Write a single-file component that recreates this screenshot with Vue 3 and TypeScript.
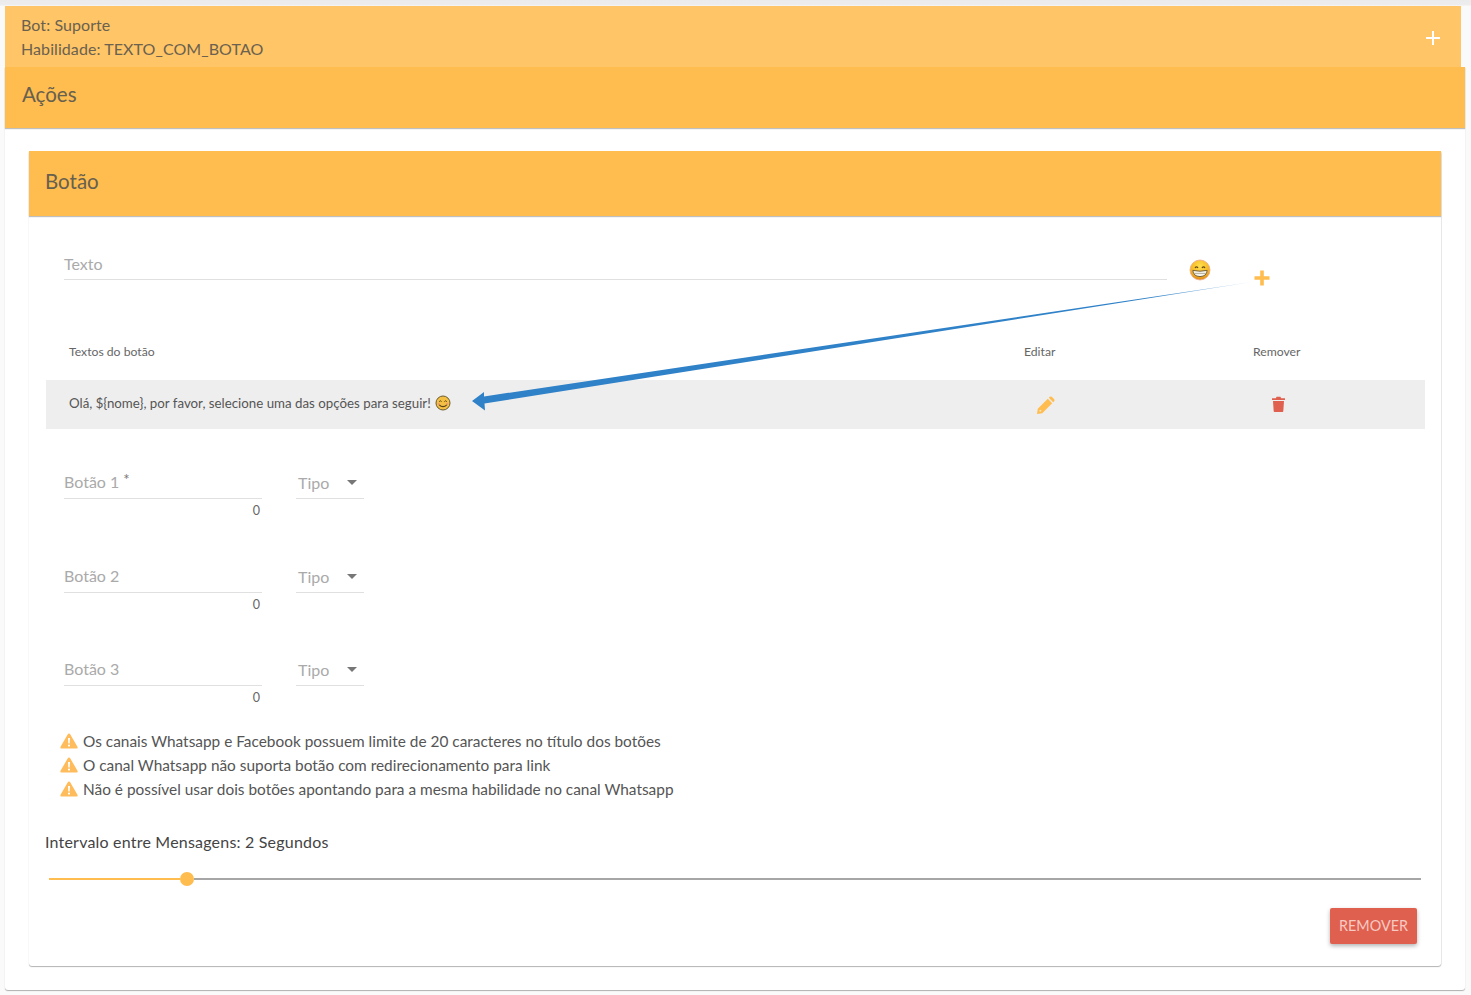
<script setup lang="ts">
const fields = [
  { label: 'Botão 1', required: true },
  { label: 'Botão 2', required: false },
  { label: 'Botão 3', required: false },
]
const warnings = [
  'Os canais Whatsapp e Facebook possuem limite de 20 caracteres no título dos botões',
  'O canal Whatsapp não suporta botão com redirecionamento para link',
  'Não é possível usar dois botões apontando para a mesma habilidade no canal Whatsapp',
]
</script>

<template>
  <div class="page">
    <div class="top">
      <div class="top-text">
        <div>Bot: Suporte</div>
        <div>Habilidade: TEXTO_COM_BOTAO</div>
      </div>
      <svg class="top-plus" width="16" height="16" viewBox="0 0 16 16"><path d="M8 1v14M1 8h14" stroke="#fff" stroke-width="2" /></svg>
    </div>
    <div class="outer">
      <div class="outer-head">Ações</div>
      <div class="outer-body">
        <div class="inner">
          <div class="inner-head">Botão</div>
          <div class="inner-body">
            <div class="text-row">
              <div class="text-field">Texto</div>
              <svg class="grin" width="22" height="22" viewBox="0 0 22 22">
                <defs>
                  <radialGradient id="g1" cx="50%" cy="30%" r="70%"><stop offset="0" stop-color="#ffdf50" /><stop offset="0.7" stop-color="#f5b41e" /><stop offset="1" stop-color="#d9841c" /></radialGradient>
                </defs>
                <circle cx="11" cy="11" r="10" fill="url(#g1)" stroke="#f0a98a" stroke-width="0.800" />
                <path d="M6 9Q7.500 6.800 9 9M13 9Q14.500 6.800 16 9" fill="none" stroke="#6a4a18" stroke-width="1.300" />
                <path d="M3.800 11.400Q11 13 18.200 11.400Q17.800 17.400 11 17.600Q4.200 17.400 3.800 11.400Z" fill="#f4f4ee" stroke="#7a6238" stroke-width="1" />
                <path d="M4.400 14.400H17.600" stroke="#a89c84" stroke-width="0.800" />
              </svg>
              <svg class="add" width="18" height="18" viewBox="0 0 18 18"><path d="M9 1.500v15M1.500 9h15" stroke="#ffbc4f" stroke-width="3.600" /></svg>
            </div>

            <div class="table">
              <div class="thead">
                <span>Textos do botão</span>
                <span>Editar</span>
                <span>Remover</span>
              </div>
              <div class="trow">
                <span class="msg">Olá, ${nome}, por favor, selecione uma das opções para seguir!
                  <svg class="smile" width="16" height="16" viewBox="0 0 16 16">
                    <circle cx="8" cy="8" r="7" fill="#f4c044" stroke="#6b5a30" stroke-width="1" />
                    <path d="M4.200 6.600Q5.400 5 6.600 6.600M9.400 6.600Q10.600 5 11.800 6.600" fill="none" stroke="#5a4420" stroke-width="1" />
                    <path d="M4 9.600Q8 13.600 12 9.600" fill="none" stroke="#5a4420" stroke-width="1.100" />
                    <circle cx="3.800" cy="8.800" r="1.100" fill="#f09a6a" /><circle cx="12.200" cy="8.800" r="1.100" fill="#f09a6a" />
                  </svg>
                </span>
                <span class="edit-cell">
                  <svg width="18" height="18" viewBox="0 0 18 18"><path d="M0 18L0.800 12.800L10.800 2.800L15.200 7.200L5.200 17.200ZM11.800 1.800L12.800 0.800Q13.800 0 14.800 0.800L17.200 3.200Q18 4.200 17.200 5.200L16.200 6.200Z" fill="#ffbc4f" /><circle cx="3.300" cy="14.700" r="1" fill="#ffe6bd" /></svg>
                </span>
                <span class="del-cell">
                  <svg width="13" height="16" viewBox="0 0 13 16"><path d="M0 2.300H3.800L4.600 0.800H8.400L9.200 2.300H13V4H0ZM1 5H12L11.300 15.200Q11.200 16 10.400 16H2.600Q1.800 16 1.700 15.200Z" fill="#e0604f" /></svg>
                </span>
              </div>
            </div>

            <div class="fields">
              <div v-for="f in fields" :key="f.label" class="field-row">
                <div class="btn-field">
                  <div class="btn-input">{{ f.label }}<sup v-if="f.required" class="req">*</sup></div>
                  <div class="count">0</div>
                </div>
                <div class="select">
                  <span>Tipo</span>
                  <i class="caret"></i>
                </div>
              </div>
            </div>

            <div class="warnings">
              <div v-for="w in warnings" :key="w" class="warn">
                <svg width="18" height="16" viewBox="0 0 18 16"><path d="M9 0.500Q9.800 0.500 10.200 1.200L17.600 14Q18 15.500 16.600 15.500H1.400Q0 15.500 0.400 14L7.800 1.200Q8.200 0.500 9 0.500Z" fill="#ffbc5c" /><path d="M8 5H10L9.700 10.500H8.300Z" fill="#fff" /><circle cx="9" cy="12.600" r="1.100" fill="#fff" /></svg>
                <span>{{ w }}</span>
              </div>
            </div>

            <div class="interval">Intervalo entre Mensagens: 2 Segundos</div>
            <div class="slider">
              <div class="track-on"></div>
              <div class="thumb"></div>
              <div class="track-off"></div>
            </div>
            <div class="actions">
              <button class="remove" type="button">REMOVER</button>
            </div>
          </div>
        </div>
      </div>
    </div>

    <svg class="arrow" width="1471" height="995" viewBox="0 0 1471 995">
      <defs>
        <linearGradient id="fade" gradientUnits="userSpaceOnUse" x1="1252" y1="282" x2="1150" y2="297">
          <stop offset="0" stop-color="#2f81c8" stop-opacity="0.4" />
          <stop offset="1" stop-color="#2f81c8" />
        </linearGradient>
      </defs>
      <path d="M1252 282L484 396.500L484 392L472 401L485 410.500L484.500 403.500Z" fill="url(#fade)" />
    </svg>
  </div>
</template>

<style scoped>
.page {
  position: relative;
  box-sizing: border-box;
  width: 1471px;
  height: 995px;
  padding: 6px 0 0 5px;
  overflow: hidden;
  background: linear-gradient(#ebebeb 0, #ededed 5px, #fafafa 6px);
  font-family: Lato, "Open Sans", sans-serif;
  font-variant-numeric: lining-nums;
  color: #666;
}
.top {
  box-sizing: border-box;
  width: 1456px;
  height: 61px;
  padding: 7px 16px 0;
  display: flex;
  justify-content: space-between;
  background: #ffc566;
  font-size: 16px;
  line-height: 24px;
  letter-spacing: 0.08px;
  color: #6a6150;
}
.top-plus {
  margin: 17px 4px 0 0;
}
.outer {
  width: 1460px;
  height: 923px;
  background: #fff;
  border-radius: 0 0 3px 3px;
  box-shadow: 0 1px 1px rgba(0, 0, 0, 0.3);
}
.outer-head {
  box-sizing: border-box;
  height: 61px;
  padding: 13px 17px;
  background: #ffbc4f;
  font-size: 20.500px;
  line-height: 28px;
  color: #66604f;
  box-shadow: 0 1px 1px rgba(0, 0, 0, 0.25);
}
.outer-body {
  padding: 23px 24px;
}
.inner {
  width: 1412px;
  height: 815px;
  background: #fff;
  border-radius: 3px;
  box-shadow: 0 1px 1px rgba(0, 0, 0, 0.3), 1px 0 0 #eee;
}
.inner-head {
  box-sizing: border-box;
  height: 65px;
  padding: 16px 16px;
  background: #ffbc4f;
  font-size: 20.500px;
  line-height: 28px;
  color: #66604f;
  box-shadow: 0 1px 1px rgba(0, 0, 0, 0.25);
}
.inner-body {
  padding: 0 16px;
}
.text-row {
  display: flex;
  align-items: flex-start;
  height: 64px;
  padding: 30px 0 0 19px;
  box-sizing: border-box;
}
.text-field {
  box-sizing: border-box;
  width: 1103px;
  height: 34px;
  padding-top: 8px;
  font-size: 16px;
  line-height: 20px;
  color: #aaa;
  border-bottom: 1px solid #e0e0e0;
}
.grin {
  margin: 13px 0 0 22px;
}
.add {
  margin: 23px 0 0 42px;
}
.table {
  width: 1379px;
  margin: 52px 0 0 1px;
}
.thead,
.trow {
  display: grid;
  grid-template-columns: 978px 229px 1fr;
  align-items: center;
}
.thead {
  height: 48px;
  padding: 0 0 10px 23px;
  box-sizing: border-box;
  font-size: 12.200px;
  color: #666;
}
.thead span:nth-child(2),
.thead span:nth-child(3) {
  margin-left: -23px;
}
.trow {
  height: 49px;
  background: #eeeeee;
  font-size: 13.300px;
  color: #555;
}
.msg {
  padding: 0 0 3px 23px;
  display: flex;
  align-items: center;
  gap: 4px;
}
.edit-cell,
.del-cell {
  display: flex;
}
.edit-cell {
  margin-left: 13px;
}
.del-cell {
  margin: 0 0 2px 19px;
}
.fields {
  padding: 30px 0 0 19px;
}
.field-row {
  display: flex;
  gap: 34px;
  height: 93.500px;
  align-items: flex-start;
}
.btn-field {
  width: 198px;
}
.btn-input {
  box-sizing: border-box;
  height: 40px;
  padding-top: 13px;
  font-size: 16px;
  line-height: 20px;
  color: #aaa;
  border-bottom: 1px solid #e0e0e0;
}
.req {
  font-size: 15px;
  line-height: 0;
  margin-left: 4px;
  color: #777;
  vertical-align: 3px;
}
.count {
  padding: 5px 2px 0 0;
  text-align: right;
  font-size: 12.500px;
  line-height: 14px;
  color: #666;
}
.select {
  box-sizing: border-box;
  width: 68px;
  height: 40px;
  padding: 14px 7px 0 2px;
  display: flex;
  justify-content: space-between;
  font-size: 16px;
  line-height: 20px;
  color: #aaa;
  border-bottom: 1px solid #e0e0e0;
}
.caret {
  width: 0;
  height: 0;
  margin-top: 7px;
  border-left: 5px solid transparent;
  border-right: 5px solid transparent;
  border-top: 5px solid #777;
}
.warnings {
  margin-top: -11px;
  padding-left: 15px;
}
.warn {
  display: flex;
  align-items: center;
  gap: 5px;
  height: 24px;
  font-size: 15.400px;
  color: #555;
}
.interval {
  margin-top: 29px;
  font-size: 16px;
  letter-spacing: 0.2px;
  line-height: 24px;
  color: #444;
}
.slider {
  display: flex;
  align-items: center;
  height: 14px;
  margin: 18px 4px 0 4px;
}
.track-on {
  width: 131px;
  height: 2px;
  background: #ffbc4f;
}
.thumb {
  flex: none;
  width: 14px;
  height: 14px;
  border-radius: 50%;
  background: #ffbc4f;
}
.track-off {
  flex: 1;
  height: 2px;
  background: #a6a6a6;
}
.actions {
  display: flex;
  justify-content: flex-end;
  margin: 22px 8px 0 0;
}
.remove {
  width: 87px;
  height: 36px;
  padding: 0;
  border: 0;
  border-radius: 2px;
  background: #e0604f;
  color: #f6c9c2;
  font-family: inherit;
  font-size: 14.400px;
  box-shadow: 0 2px 4px rgba(0, 0, 0, 0.3);
}
.arrow {
  position: absolute;
  left: 0;
  top: 0;
  pointer-events: none;
}
</style>
